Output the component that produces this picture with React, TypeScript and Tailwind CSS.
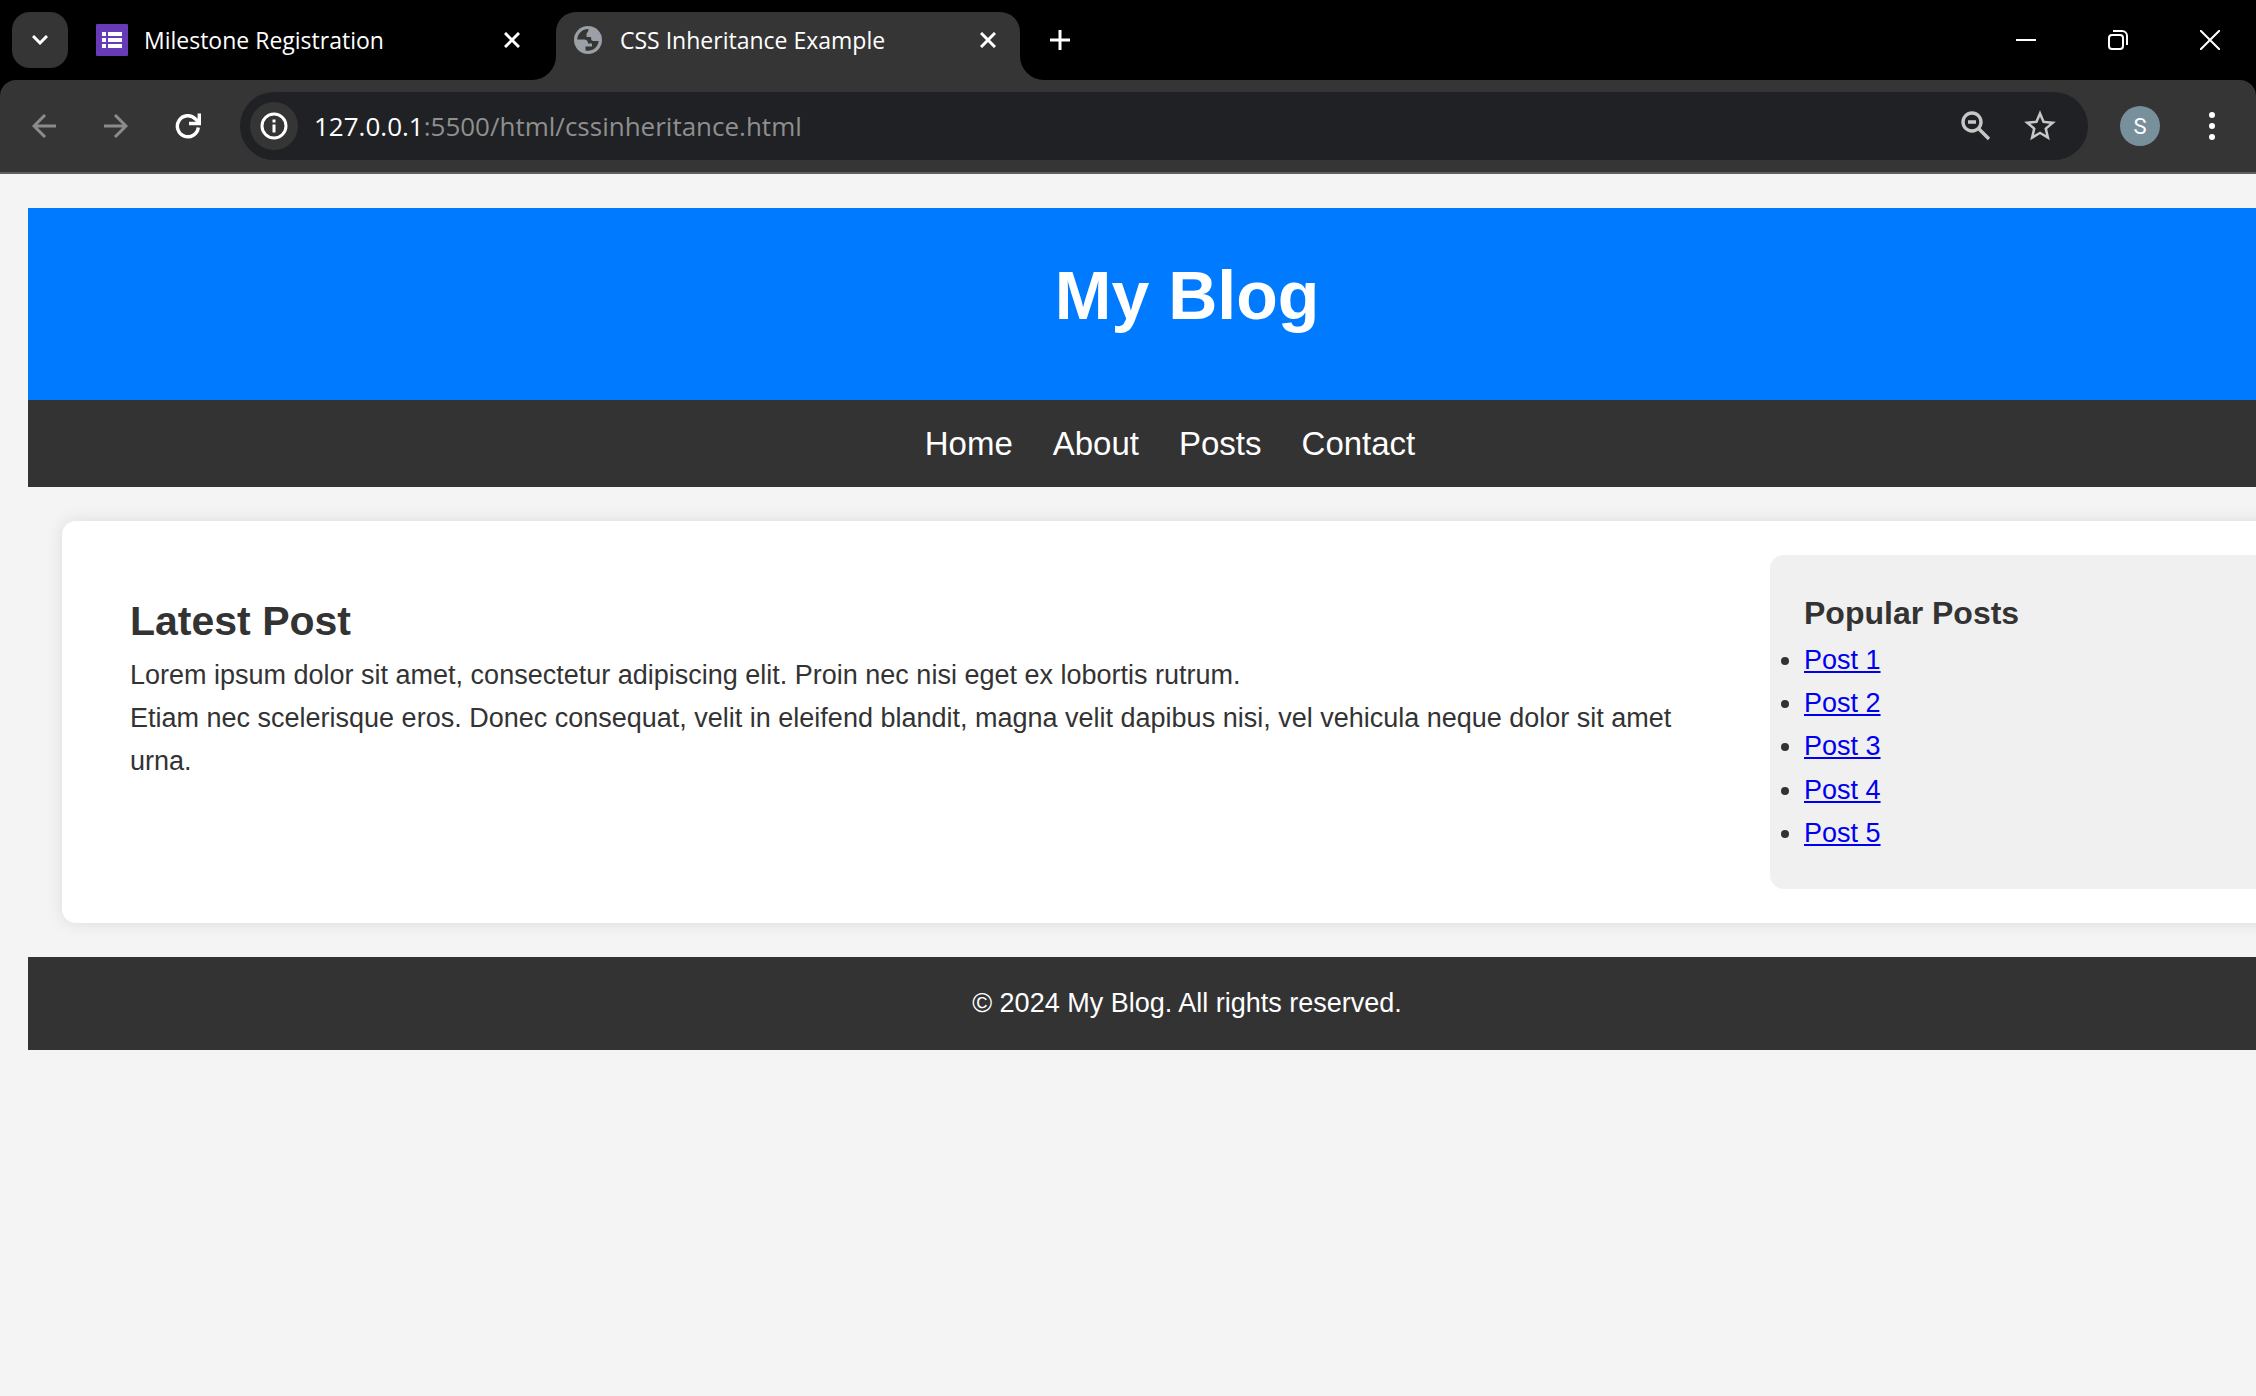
import type { ReactNode } from "react";

const iconButton = "flex size-12 shrink-0 items-center justify-center rounded-full text-white";

function CloseIcon() {
  return (
    <svg viewBox="0 0 16 16" className="size-4" fill="none" stroke="currentColor" strokeWidth="3">
      <path d="M1 1l14 14M15 1L1 15" />
    </svg>
  );
}

function GlobeIcon() {
  return (
    <svg viewBox="0 0 28 28" className="size-7 shrink-0">
      <circle cx="14" cy="14" r="14" fill="#9aa0a6" />
      <path
        fill="#353535"
        d="M14.500 3 C8 3 3.500 8 3.200 13.500 L10 13.500 C12.500 13.500 14 15 14 17.500 L18 17.500 L18 20.500 L11.500 20.500 L11.500 24.500 C18 26 24 21.500 24.700 15 L19.500 15 C17.500 15 17 13.500 17 11 L12.500 11 L12.500 8.500 C12.500 6.500 14.500 6.500 14.500 3 Z"
      />
    </svg>
  );
}

function FormsIcon() {
  return (
    <svg viewBox="0 0 32 32" className="size-8 shrink-0">
      <rect width="32" height="32" rx="1" fill="#673ab7" />
      <path fill="#fff" d="M6 8h4v4H6zM12 8h14v4H12zM6 14h4v4H6zM12 14h14v4H12zM6 20h4v4H6zM12 20h14v4H12z" />
    </svg>
  );
}

function TabStrip() {
  return (
    <div className="flex h-20 items-center bg-black pl-3 text-[23px] text-white">
      <button aria-label="Search tabs" className="flex size-14 items-center justify-center rounded-[18px] bg-[#353535]">
        <svg viewBox="0 0 16 10" className="h-[10px] w-4" fill="none" stroke="currentColor" strokeWidth="3">
          <path d="M1 1l7 7 7-7" />
        </svg>
      </button>
      <div className="flex w-[488px] items-center pr-[20px] pl-7">
        <FormsIcon />
        <span className="ml-4 flex-1 whitespace-nowrap">Milestone Registration</span>
        <button aria-label="Close Milestone Registration" className={iconButton}>
          <CloseIcon />
        </button>
      </div>
      <div className="relative flex h-[68px] w-[464px] items-center self-end rounded-t-[20px] bg-[#353535] pr-2 pb-3 pl-[18px]">
        <span className="absolute bottom-0 -left-6 size-6 bg-[#353535]">
          <span className="block size-6 rounded-br-[24px] bg-black" />
        </span>
        <span className="absolute -right-6 bottom-0 size-6 bg-[#353535]">
          <span className="block size-6 rounded-bl-[24px] bg-black" />
        </span>
        <GlobeIcon />
        <span className="ml-[18px] flex-1 whitespace-nowrap">CSS Inheritance Example</span>
        <button aria-label="Close CSS Inheritance Example" className={iconButton}>
          <CloseIcon />
        </button>
      </div>
      <button aria-label="New tab" className={`${iconButton} ml-4`}>
        <svg viewBox="0 0 20 20" className="size-5" fill="none" stroke="currentColor" strokeWidth="3">
          <path d="M10 0v20M0 10h20" />
        </svg>
      </button>
      <div className="ml-auto flex">
        <WindowButton label="Minimize">
          <path d="M0 10h20" />
        </WindowButton>
        <WindowButton label="Restore">
          <rect x="1" y="5" width="14" height="14" rx="3" />
          <path d="M5 1h9a5 5 0 0 1 5 5v9" />
        </WindowButton>
        <WindowButton label="Close">
          <path d="M0 0l20 20M20 0L0 20" />
        </WindowButton>
      </div>
    </div>
  );
}

function WindowButton({ label, children }: { label: string; children: ReactNode }) {
  return (
    <button aria-label={label} className="flex h-20 w-[92px] items-center justify-center">
      <svg viewBox="0 0 20 20" className="size-5" fill="none" stroke="currentColor" strokeWidth="2">
        {children}
      </svg>
    </button>
  );
}

function Toolbar() {
  return (
    <div className="bg-black">
      <div className="flex h-[94px] items-center rounded-t-2xl border-b-2 border-[#5f5f5f] bg-[#353535] pr-5 pl-5">
        <div className="flex gap-6">
          <button aria-label="Back" className={iconButton}>
            <svg viewBox="0 0 24 24" className="size-6" fill="none" stroke="#8b8b8b" strokeWidth="3">
              <path d="M24 12H2M13 1L2 12l11 11" />
            </svg>
          </button>
          <button aria-label="Forward" className={iconButton}>
            <svg viewBox="0 0 24 24" className="size-6" fill="none" stroke="#8b8b8b" strokeWidth="3">
              <path d="M0 12h22M11 1l11 11-11 11" />
            </svg>
          </button>
          <button aria-label="Reload" className={iconButton}>
            <svg viewBox="0 0 26 26" className="size-[26px]" fill="none" stroke="currentColor" strokeWidth="3.400">
              <path d="M23.300 14.500A10.500 10.500 0 1 1 20.500 6L24 9.500" />
              <path d="M24.300 0.500v10H14" />
            </svg>
          </button>
        </div>
        <div className="ml-7 flex h-[68px] flex-1 items-center rounded-full bg-[#202124] pr-6 pl-[10px]">
          <button aria-label="Site information" className={`${iconButton} bg-[#353535]`}>
            <svg viewBox="0 0 28 28" className="size-7" fill="none" stroke="currentColor" strokeWidth="3">
              <circle cx="14" cy="14" r="12" />
              <path d="M14 12.500v8M14 7.500v3" />
            </svg>
          </button>
          <div className="ml-4 flex-1 text-[26px] whitespace-nowrap text-[#8f8f8f]">
            <span className="text-white">127.0.0.1</span>:5500/html/cssinheritance.html
          </div>
          <div className="flex gap-4">
            <button aria-label="Zoom" className={iconButton}>
              <svg viewBox="0 0 30 30" className="size-[30px]" fill="none" stroke="#c7c7c7" strokeWidth="3.400">
                <circle cx="11" cy="11" r="9" />
                <path d="M18 18l10 10M7 11h8" />
              </svg>
            </button>
            <button aria-label="Bookmark this tab" className={iconButton}>
              <svg viewBox="0 0 24 24" className="size-[38px]" fill="#c7c7c7">
                <path d="M22 9.240l-7.190-.62L12 2 9.190 8.630 2 9.240l5.460 4.730L5.820 21 12 17.270 18.180 21l-1.630-7.030L22 9.240zM12 15.400l-3.760 2.270 1-4.280-3.320-2.880 4.380-.38L12 6.100l1.710 4.040 4.380.38-3.320 2.880 1 4.280L12 15.400z" />
              </svg>
            </button>
          </div>
        </div>
        <button aria-label="Profile" className="ml-8 size-10 rounded-full bg-[#78909c] font-['Roboto'] text-[22px] text-white">
          S
        </button>
        <button aria-label="Menu" className={`${iconButton} ml-7`}>
          <svg viewBox="0 0 6 28" className="h-7 w-[6px]" fill="currentColor">
            <circle cx="3" cy="3" r="3" />
            <circle cx="3" cy="14" r="3" />
            <circle cx="3" cy="25" r="3" />
          </svg>
        </button>
      </div>
    </div>
  );
}

const navItems = ["Home", "About", "Posts", "Contact"];
const posts = ["Post 1", "Post 2", "Post 3", "Post 4", "Post 5"];

function Blog() {
  return (
    <div className="mt-[34px] -mr-[90px] ml-7 text-[27px] leading-[1.6] text-[#333333]">
      <header className="bg-[#007bff] p-[34px] text-center text-white">
        <h1 className="mb-[18px] text-[68px] leading-[106px] font-bold">My Blog</h1>
      </header>
      <nav className="bg-[#333333] py-[17px] text-[33px] leading-[53px] text-white">
        <ul className="flex justify-center gap-10 pr-[34px]">
          {navItems.map((item) => (
            <li key={item}>
              <a href="#">{item}</a>
            </li>
          ))}
        </ul>
      </nav>
      <div className="m-[34px] flex rounded-[14px] bg-white p-[34px] shadow-[0_0_17px_rgba(0,0,0,0.1)]">
        <main className="flex-1 p-[34px]">
          <h2 className="text-[41px] leading-[65px] font-bold">Latest Post</h2>
          <p>Lorem ipsum dolor sit amet, consectetur adipiscing elit. Proin nec nisi eget ex lobortis rutrum.</p>
          <p>
            Etiam nec scelerisque eros. Donec consequat, velit in eleifend blandit, magna velit dapibus nisi, vel
            vehicula neque dolor sit amet urna.
          </p>
        </main>
        <aside className="w-[508px] rounded-[14px] bg-[#f0f0f0] p-[34px]">
          <h3 className="mb-[2px] text-[32px] leading-[48px] font-bold">Popular Posts</h3>
          <ul className="list-disc">
            {posts.map((post) => (
              <li key={post}>
                <a href="#" className="text-[#0000ee] underline">
                  {post}
                </a>
              </li>
            ))}
          </ul>
        </aside>
      </div>
      <footer className="bg-[#333333] py-[25px] text-center text-white">
        <p>© 2024 My Blog. All rights reserved.</p>
      </footer>
    </div>
  );
}

export default function App() {
  return (
    <div className="flex min-h-screen flex-col overflow-hidden bg-[#f4f4f4]">
      <div className="font-['Open_Sans',sans-serif]">
        <TabStrip />
        <Toolbar />
      </div>
      <div className="font-['Liberation_Sans',sans-serif]">
        <Blog />
      </div>
    </div>
  );
}
